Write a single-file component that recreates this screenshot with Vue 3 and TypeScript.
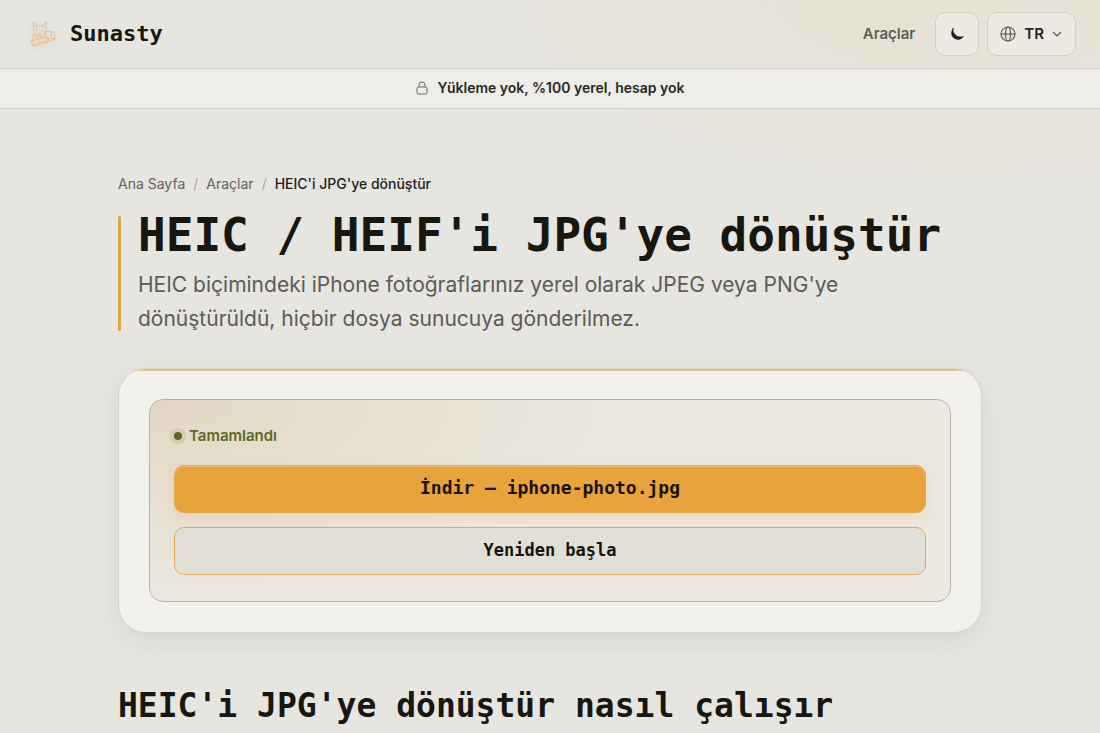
<script setup lang="ts">
import { ref } from 'vue'

interface Crumb {
  label: string
  href: string
}

const crumbs: Crumb[] = [
  { label: 'Ana Sayfa', href: '#home' },
  { label: 'Araçlar', href: '#tools' },
]
const fileName = ref<string>('iphone-photo.jpg')
</script>

<template>
  <div class="page">
    <header class="topbar">
      <a class="brand" href="#home">
        <svg class="cat" viewBox="0 0 36 36" fill="none" aria-hidden="true">
          <g stroke="#e9bc80" stroke-width="0.9" stroke-linejoin="round" stroke-linecap="round">
            <path d="M9.500 14 9 6l4 4q3-1 5 0l4-4v9q-1 5-6 6-5-1-6.500-7Z" />
            <path d="m10 9 3 3m8-3-3 3M12 14l2 1m6-1-2 1m-2 2v1m-2 0 2 1 2-1" />
            <path d="m10 18-2 6v5l3 1 10-3 10-4-1-7-5-1-3 1" />
            <path d="m8 25 6-2 8-2 3 3-4 2-8 1-4 2m3-10 1 4m8-5 2 5 5-1 3 1m-4-7 1 6" />
          </g>
        </svg>
        <span>Sunasty</span>
      </a>
      <nav class="actions" aria-label="Ana menü">
        <a class="tools" href="#tools">Araçlar</a>
        <button class="control moon" type="button" aria-label="Koyu tema">
          <svg width="16" height="16" viewBox="0 0 16 16" aria-hidden="true">
            <path d="M4 2C1 6 2 11 6 13c4 2 7 0 9-3-3 1-7 1-9-2C4 6 4 4 5 2Z" fill="#24231d" />
          </svg>
        </button>
        <button class="control language" type="button" aria-label="Dil: TR">
          <svg width="16" height="16" viewBox="0 0 16 16" fill="none" stroke="#5f5d54" stroke-width="1.2" aria-hidden="true">
            <circle cx="8" cy="8" r="7" /><ellipse cx="8" cy="8" rx="2.500" ry="7" /><path d="M1 8h14" />
          </svg>
          <span>TR</span>
          <svg width="10" height="10" viewBox="0 0 10 10" fill="none" stroke="#55534b" stroke-width="1.2" aria-hidden="true">
            <path d="m1 3 4 4 4-4" />
          </svg>
        </button>
      </nav>
    </header>

    <div class="notice">
      <svg width="12" height="14" viewBox="0 0 12 14" fill="none" stroke="#68665f" aria-hidden="true">
        <rect x="1" y="6" width="10" height="7" rx="1.5" /><path d="M3 6V4a3 3 0 0 1 6 0v2" />
      </svg>
      <span>Yükleme yok, %100 yerel, hesap yok</span>
    </div>

    <main class="content">
      <nav class="crumbs" aria-label="İçerik yolu">
        <template v-for="crumb in crumbs" :key="crumb.href">
          <a :href="crumb.href">{{ crumb.label }}</a>
          <span class="slash" aria-hidden="true">/</span>
        </template>
        <span class="current" aria-current="page">HEIC'i JPG'ye dönüştür</span>
      </nav>

      <div class="intro">
        <h1>HEIC / HEIF'i JPG'ye dönüştür</h1>
        <p>HEIC biçimindeki iPhone fotoğraflarınız yerel olarak JPEG veya PNG'ye dönüştürüldü, hiçbir dosya sunucuya gönderilmez.</p>
      </div>

      <section class="card">
        <div class="result">
          <p class="status" role="status"><span class="dot"></span>Tamamlandı</p>
          <button class="action primary" type="button">İndir — {{ fileName }}</button>
          <button class="action secondary" type="button">Yeniden başla</button>
        </div>
      </section>

      <h2>HEIC'i JPG'ye dönüştür nasıl çalışır</h2>
    </main>
  </div>
</template>

<style>
html {
  overflow: hidden;
}
body {
  margin: 0;
  background: #e6e5e0;
}
</style>

<style scoped>
* {
  box-sizing: border-box;
}
.page {
  min-height: 100vh;
  background: radial-gradient(ellipse 500px 200px at 88% 0, #e6e2d4 0, #e6e3d9 60%, #e6e5e0 100%) #e6e5e0;
  font-family: Inter, "Liberation Sans", sans-serif;
  color: #17160f;
}
a {
  color: inherit;
  text-decoration: none;
}
.topbar {
  display: flex;
  align-items: center;
  justify-content: space-between;
  height: 69px;
  padding: 0 24px;
  border-bottom: 1px solid #cfcec8;
}
.brand {
  display: flex;
  align-items: center;
  gap: 10px;
  font: 700 22px/28px "DejaVu Sans Mono", monospace;
}
.cat {
  width: 36px;
  height: 36px;
  filter: drop-shadow(0 2px 4px #c9ac8055);
}
.actions {
  display: flex;
  align-items: center;
  gap: 8px;
}
.tools {
  margin-right: 12px;
  font-size: 15px;
  line-height: 20px;
  font-weight: 600;
  color: #605e56;
}
.control {
  display: flex;
  align-items: center;
  justify-content: center;
  height: 44px;
  padding: 0;
  border: 1px solid #d3d0c6;
  border-radius: 10px;
  background: #edeae3;
  font: 600 15px/20px Inter, sans-serif;
  color: #24231e;
}
.moon {
  width: 44px;
}
.language {
  gap: 8px;
  padding: 0 13px 0 12px;
}
.notice {
  display: flex;
  align-items: center;
  justify-content: center;
  gap: 10px;
  height: 40px;
  padding-bottom: 1px;
  border-bottom: 1px solid #cfcec8;
  background: #eeede8;
  font-size: 14px;
  line-height: 20px;
  font-weight: 600;
  color: #282722;
}
.content {
  max-width: 912px;
  margin: 0 auto;
  padding: 64px 24px 0;
}
.crumbs {
  display: flex;
  gap: 8px;
  font-size: 14px;
  line-height: 22px;
  color: #65635b;
}
.slash {
  color: #aaa8a0;
}
.current {
  font-weight: 500;
  color: #22211b;
}
.intro {
  position: relative;
  margin-top: 21px;
  padding-left: 20px;
}
.intro::before {
  content: "";
  position: absolute;
  inset: 0 auto 5px 0;
  width: 3px;
  border-radius: 2px;
  background: #e0a347;
}
h1,
h2 {
  margin: 0;
  font-family: "DejaVu Sans Mono", monospace;
  font-weight: 700;
}
h1 {
  font-size: 46px;
  line-height: 38px;
}
.intro p {
  max-width: 720px;
  margin: 14px 0 0;
  font-size: 21px;
  line-height: 34px;
  color: #5d5b53;
}
.card {
  position: relative;
  overflow: hidden;
  margin-top: 32px;
  padding: 30px;
  border: 1px solid #d4d3cd;
  border-radius: 28px;
  background: #f2f1ec;
  box-shadow: 0 8px 24px #5a58401c;
}
.card::before {
  content: "";
  position: absolute;
  inset: 0 0 auto;
  height: 2px;
  background: #e9bd7b;
}
.result {
  display: flex;
  flex-direction: column;
  padding: 24px 24px 26px;
  border: 1px solid #b5b2aa;
  border-radius: 14px;
  background: radial-gradient(ellipse 60% 100% at 0 0, #e3d7c4, transparent) #ece9e1;
}
.status {
  display: flex;
  align-items: center;
  gap: 7px;
  margin: 0 0 17px;
  font-size: 15px;
  line-height: 24px;
  font-weight: 600;
  color: #5e6a1d;
}
.dot {
  width: 8px;
  height: 8px;
  border-radius: 50%;
  background: #5e6a1d;
  box-shadow: 0 0 0 4px #d9cbb0;
}
.action {
  height: 48px;
  padding: 0 16px 2px;
  border: 1px solid #e3a951;
  border-radius: 10px;
  font: 700 18px/24px "DejaVu Sans Mono", monospace;
  color: #17130a;
}
.primary {
  background: #e8a33b;
  box-shadow: inset 0 1px 0 #edbb6d, 0 5px 14px #e8a33b35;
}
.secondary {
  margin-top: 14px;
  background: #e2dfd7;
  font-size: 17px;
}
h2 {
  margin-top: 51px;
  font-size: 33px;
  line-height: 44px;
}
</style>
